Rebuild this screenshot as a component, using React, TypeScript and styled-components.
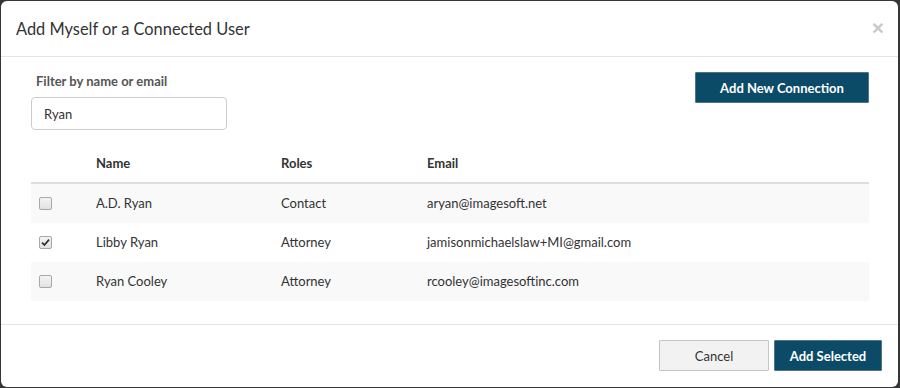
import React, { useState } from 'react'
import styled, { createGlobalStyle } from 'styled-components'

const GlobalStyle = createGlobalStyle`
  html, body {
    margin: 0;
    padding: 0;
    background: #363636;
  }
  body {
    font-family: Lato, "Open Sans", sans-serif;
    color: #333;
  }
`

const Backdrop = styled.div`
  width: 900px;
  height: 388px;
  padding: 1px 2px 1px 1px;
  box-sizing: border-box;
`

const Dialog = styled.div`
  width: 897px;
  height: 386px;
  background: #fff;
  border-radius: 6px;
  display: flex;
  flex-direction: column;
  overflow: hidden;
`

const Header = styled.div`
  display: flex;
  align-items: center;
  justify-content: space-between;
  height: 55px;
  padding: 0 14px 0 15px;
  border-bottom: 1px solid #e5e5e5;
`

const Title = styled.h4`
  margin: 0;
  font-size: 16.4px;
  font-weight: 400;
  color: #333;
`

const Close = styled.button`
  border: 0;
  background: none;
  padding: 0;
  font-size: 21px;
  line-height: 1;
  font-weight: 700;
  color: #c9c9c9;
  cursor: pointer;
  margin-top: -3px;
`

const Body = styled.div`
  flex: 1;
  padding: 15px 29px 0 30px;
`

const Toolbar = styled.div`
  display: flex;
  justify-content: space-between;
  align-items: flex-start;
`

const Filter = styled.div`
  display: flex;
  flex-direction: column;
`

const Label = styled.label`
  font-size: 13px;
  font-weight: 700;
  color: #555;
  line-height: 18px;
  margin: 0 0 7px 5px;
`

const Input = styled.input`
  width: 196px;
  height: 33px;
  box-sizing: border-box;
  border: 1px solid #ccc;
  border-radius: 4px;
  padding: 0 12px;
  font-family: inherit;
  font-size: 13px;
  color: #333;
  outline: none;
`

const Button = styled.button<{ $primary?: boolean; $w: number }>`
  width: ${p => p.$w}px;
  height: 31px;
  box-sizing: border-box;
  padding: 0 12px;
  font-family: inherit;
  font-size: 13px;
  border-radius: 1px;
  cursor: pointer;
  color: ${p => (p.$primary ? '#fff' : '#333')};
  background: ${p => (p.$primary ? '#0b4b67' : '#f2f2f2')};
  border: 1px solid ${p => (p.$primary ? '#4f7485' : '#c4c4c4')};
  font-weight: ${p => (p.$primary ? 700 : 400)};
`

const Table = styled.table`
  width: 100%;
  margin-top: 14px;
  border-collapse: collapse;
  font-size: 13px;
`

const Th = styled.th<{ $w?: number }>`
  text-align: left;
  font-weight: 700;
  padding: 8px;
  line-height: 22px;
  border-bottom: 2px solid #ddd;
  width: ${p => (p.$w ? `${p.$w}px` : 'auto')};
  box-sizing: border-box;
`

const Row = styled.tr<{ $striped: boolean }>`
  background: ${p => (p.$striped ? '#f9f9f9' : '#fff')};
  & + & td {
    border-top: 1px solid #ddd;
  }
`

const Td = styled.td`
  padding: 9px 8px;
  line-height: 21px;
  vertical-align: middle;
`

const Check = styled.span`
  display: inline-flex;
  align-items: center;
  justify-content: center;
  width: 13px;
  height: 13px;
  box-sizing: border-box;
  border: 1px solid #a8a8a8;
  border-radius: 2px;
  background: linear-gradient(#f4f4f4, #e2e2e2);
  vertical-align: middle;
  cursor: pointer;
  margin-top: -3px;
`

const Footer = styled.div`
  display: flex;
  justify-content: flex-end;
  gap: 5px;
  padding: 15px 16px 16px 0;
  border-top: 1px solid #e5e5e5;
`

type User = { name: string; role: string; email: string }

const users: User[] = [
  { name: 'A.D. Ryan', role: 'Contact', email: 'aryan@imagesoft.net' },
  { name: 'Libby Ryan', role: 'Attorney', email: 'jamisonmichaelslaw+MI@gmail.com' },
  { name: 'Ryan Cooley', role: 'Attorney', email: 'rcooley@imagesoftinc.com' },
]

export default function App() {
  const [selected, setSelected] = useState<number[]>([1])
  const [filter, setFilter] = useState('Ryan')

  const toggle = (i: number) =>
    setSelected(s => (s.includes(i) ? s.filter(x => x !== i) : [...s, i]))

  return (
    <Backdrop>
      <GlobalStyle />
      <Dialog>
        <Header>
          <Title>Add Myself or a Connected User</Title>
          <Close>×</Close>
        </Header>
        <Body>
          <Toolbar>
            <Filter>
              <Label>Filter by name or email</Label>
              <Input value={filter} onChange={e => setFilter(e.target.value)} />
            </Filter>
            <Button $primary $w={174}>Add New Connection</Button>
          </Toolbar>
          <Table>
            <thead>
              <tr>
                <Th $w={57}></Th>
                <Th $w={185}>Name</Th>
                <Th $w={146}>Roles</Th>
                <Th>Email</Th>
              </tr>
            </thead>
            <tbody>
              {users.map((u, i) => (
                <Row key={u.email} $striped={i % 2 === 0}>
                  <Td>
                    <Check onClick={() => toggle(i)}>
                      {selected.includes(i) && (
                        <svg width="9" height="9" viewBox="0 0 9 9">
                          <path d="M1 4.6 L3.5 7 L8 1.6" fill="none" stroke="#333" strokeWidth="1.8" />
                        </svg>
                      )}
                    </Check>
                  </Td>
                  <Td>{u.name}</Td>
                  <Td>{u.role}</Td>
                  <Td>{u.email}</Td>
                </Row>
              ))}
            </tbody>
          </Table>
        </Body>
        <Footer>
          <Button $w={110}>Cancel</Button>
          <Button $primary $w={108}>Add Selected</Button>
        </Footer>
      </Dialog>
    </Backdrop>
  )
}
